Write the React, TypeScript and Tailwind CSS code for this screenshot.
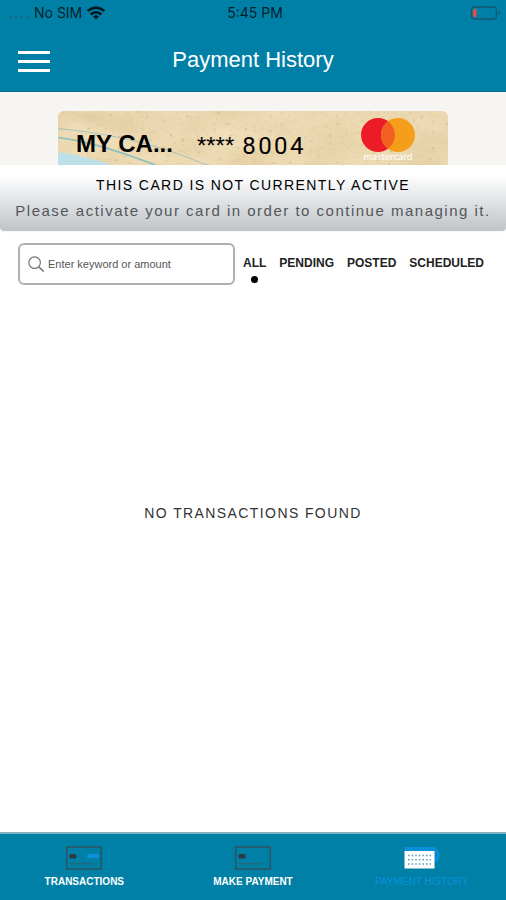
import { useState } from "react";

const filters = ["ALL", "PENDING", "POSTED", "SCHEDULED"];

function StatusBar() {
  return (
    <div className="grid grid-cols-3 items-center h-[26px] pl-2 pr-1 text-sm leading-4 text-[#06222c] font-['Inter','Liberation_Sans',sans-serif]">
      <div className="flex items-center gap-1">
        <svg className="w-[22px] h-4" viewBox="0 0 22 16" fill="#1d6781" aria-hidden="true">
          <circle cx="2" cy="12" r="1.2" />
          <circle cx="8" cy="12" r="1.2" />
          <circle cx="14" cy="12" r="1.2" />
          <circle cx="20" cy="12" r="1.2" />
        </svg>
        <span className="whitespace-nowrap">No SIM</span>
        <svg className="w-5 h-4" viewBox="0 0 20 16" fill="none" stroke="#03171f" strokeWidth="2.5" aria-hidden="true">
          <path d="M1.6 6.2a12 12 0 0 1 16.8 0" />
          <path d="M4.7 9.5a7.6 7.6 0 0 1 10.6 0" />
          <path d="M10 14.6l-2.9-3a4.2 4.2 0 0 1 5.8 0z" fill="#03171f" stroke="none" />
        </svg>
      </div>
      <span className="text-center">5:45 PM</span>
      <svg className="w-8 h-4 justify-self-end" viewBox="0 0 32 16" aria-hidden="true">
        <rect x="1.5" y="2" width="25" height="12" rx="3" fill="none" stroke="#14566e" strokeWidth="1.3" />
        <path d="M3 6a2 2 0 0 1 2-2h1.5v8h-1.5a2 2 0 0 1-2-2z" fill="#f0494a" />
        <path d="M28.5 5.8v4.4a2.4 2.4 0 0 0 0-4.4z" fill="#14566e" />
      </svg>
    </div>
  );
}

function SandBackground() {
  return (
    <svg
      className="absolute inset-0 w-full h-full"
      viewBox="0 0 392 55"
      preserveAspectRatio="none"
      aria-hidden="true"
    >
      <defs>
        <linearGradient id="sand" x1="0" y1="0" x2="1" y2="1">
          <stop offset="0" stopColor="#e3cda2" />
          <stop offset="0.4" stopColor="#ead6ad" />
          <stop offset="1" stopColor="#e5cfa3" />
        </linearGradient>
        <filter id="grain" x="0" y="0" width="100%" height="100%" colorInterpolationFilters="sRGB">
          <feTurbulence type="fractalNoise" baseFrequency="0.25" numOctaves="2" seed="8" />
          <feColorMatrix values="0 0 0 0 0.66  0 0 0 0 0.53  0 0 0 0 0.33  4 0 0 0 -2.6" />
        </filter>
        <filter id="dunes" x="0" y="0" width="100%" height="100%" colorInterpolationFilters="sRGB">
          <feTurbulence type="fractalNoise" baseFrequency="0.02 0.05" numOctaves="3" seed="3" />
          <feColorMatrix values="0 0 0 0 0.96  0 0 0 0 0.9  0 0 0 0 0.77  1.4 0 0 0 -0.4" />
        </filter>
      </defs>
      <rect width="392" height="55" fill="url(#sand)" />
      <rect width="392" height="55" filter="url(#dunes)" opacity="0.8" />
      <rect width="392" height="55" filter="url(#grain)" opacity="0.35" />
      <path d="M0 42C18 44 38 49 54 55H0z" fill="#bfdfe8" />
      <g fill="none" stroke="#86bdc0">
        <path d="M0 27C32 31 64 42 98 55" strokeWidth="1.6" />
        <path d="M0 18C54 23 101 34 149 55" strokeWidth="0.9" opacity="0.8" />
      </g>
    </svg>
  );
}

function MastercardLogo() {
  return (
    <svg className="w-14 h-11" viewBox="0 0 56 44" role="img" aria-label="mastercard">
      <circle cx="18" cy="17" r="17" fill="#eb1c26" />
      <circle cx="38" cy="17" r="17" fill="#f59e1b" />
      <path d="M28 3.3a17 17 0 0 1 0 27.4a17 17 0 0 1 0-27.4z" fill="#f26122" />
      <text x="28" y="42" textAnchor="middle" fontSize="10" fill="#fff" fontFamily="Lato, sans-serif">
        mastercard
      </text>
    </svg>
  );
}

function CardIcon({ accent = false }: { accent?: boolean }) {
  return (
    <svg className="w-9 h-6" viewBox="0 0 36 24" aria-hidden="true">
      <rect x="0.8" y="1" width="34.4" height="22" fill="none" stroke="#31515d" strokeWidth="1.4" />
      <rect x="3.5" y="8" width="7" height="4.5" rx="1.5" fill="#2b3b43" />
      {accent && <rect x="21" y="8" width="12" height="4" rx="1.5" fill="#0a91dc" />}
      <path d="M4 17.8h23" stroke="#31616f" strokeWidth="1.4" strokeDasharray="3 0.6" />
    </svg>
  );
}

function CalendarIcon() {
  return (
    <svg className="w-9 h-6" viewBox="0 0 36 24" aria-hidden="true">
      <path d="M0.5 1H31l4.5 6v6.5l-4 2.5H28V5H0.5z" fill="#078fd9" />
      <path d="M31.5 5.5l1.5 3-1.5 3z" fill="#0080a6" />
      <rect x="0.5" y="5" width="30" height="17.5" fill="#fff" />
      <g stroke="#5f9fba" strokeWidth="1.5" strokeDasharray="1.6 2">
        <path d="M4 9.5h23" />
        <path d="M4 13.7h23" />
        <path d="M4 18h23" />
      </g>
    </svg>
  );
}

export default function App() {
  const [filter, setFilter] = useState("ALL");
  const [query, setQuery] = useState("");

  return (
    <div className="min-h-screen flex flex-col bg-white text-black font-['Liberation_Sans',Arial,sans-serif]">
      <header className="bg-[#0080a6] border-b border-[#086d93] pb-1">
        <StatusBar />
        <div className="grid grid-cols-[1fr_auto_1fr] items-center h-[61px] px-[18px] pt-1.5">
          <button type="button" aria-label="Menu" className="flex flex-col gap-1.5 w-8 pt-1">
            <span className="h-[3px] w-full bg-white" />
            <span className="h-[3px] w-full bg-white" />
            <span className="h-[3px] w-full bg-white" />
          </button>
          <h1 className="text-[22px] leading-7 text-white">Payment History</h1>
        </div>
      </header>

      <section className="bg-[#f7f5f1] px-[58px] pt-[19px]">
        <div className="relative overflow-hidden rounded-t-md">
          <SandBackground />
          <div className="relative flex items-start justify-between h-[54px] pl-[18px] pr-8 pt-[7px]">
            <div className="flex items-center gap-6 pt-2">
              <span className="text-2xl leading-8 font-bold">MY CA...</span>
              <span className="flex items-center gap-2 pt-1">
                <span className="text-2xl leading-8">****</span>
                <span className="text-2xl leading-8 tracking-widest font-[Roboto,sans-serif]">8004</span>
              </span>
            </div>
            <MastercardLogo />
          </div>
        </div>
      </section>

      <section className="rounded-b bg-linear-to-b from-white from-15% to-[#bfc4c8] text-center pt-2.5 pb-2.5 shadow-xs">
        <h2 className="text-sm leading-5 tracking-widest">THIS CARD IS NOT CURRENTLY ACTIVE</h2>
        <p className="mt-1.5 text-[15px] leading-5 tracking-widest text-[#53575b]">
          Please activate your card in order to continue managing it.
        </p>
      </section>

      <main className="flex-1 flex flex-col">
        <div className="flex items-start gap-2 pt-3 pl-[18px] pr-[22px]">
          <label className="flex flex-1 min-w-0 items-center gap-1 h-[42px] px-2 border-2 border-[#b0b0b0] rounded-md">
            <svg className="w-4 h-4 shrink-0" viewBox="0 0 16 16" fill="none" stroke="#777" strokeWidth="1.2" aria-hidden="true">
              <circle cx="6.6" cy="6.6" r="5.8" />
              <path d="M10.8 10.8L15.6 15.6" strokeWidth="1.6" />
            </svg>
            <input
              type="text"
              aria-label="Search transactions"
              value={query}
              onChange={(e) => setQuery(e.target.value)}
              placeholder="Enter keyword or amount"
              className="w-full min-w-0 text-[11px] leading-4 outline-none placeholder:text-[#555]"
            />
          </label>
          <div className="flex gap-[13px] pt-3">
            {filters.map((name) => (
              <button
                key={name}
                type="button"
                aria-pressed={filter === name}
                onClick={() => setFilter(name)}
                className="flex flex-col items-center gap-[5px] text-xs leading-4 font-bold text-[#222]"
              >
                {name}
                {filter === name && <span className="w-[7px] h-[7px] rounded-full bg-black" />}
              </button>
            ))}
          </div>
        </div>
        <div className="flex-1 flex items-center justify-center pb-[92px]">
          <p className="text-sm leading-5 tracking-widest text-[#333]">NO TRANSACTIONS FOUND</p>
        </div>
      </main>

      <nav className="grid grid-cols-3 bg-[#0080a6] border-t-2 border-[#7fb4c0] pt-3 pb-2.5 text-[10px] leading-4 font-bold text-white">
        <a href="#transactions" className="flex flex-col items-center gap-1">
          <CardIcon accent />
          TRANSACTIONS
        </a>
        <a href="#make-payment" className="flex flex-col items-center gap-1">
          <CardIcon />
          MAKE PAYMENT
        </a>
        <a href="#payment-history" aria-current="page" className="flex flex-col items-center gap-1 font-normal text-[#0a91dc]">
          <CalendarIcon />
          PAYMENT HISTORY
        </a>
      </nav>
    </div>
  );
}
